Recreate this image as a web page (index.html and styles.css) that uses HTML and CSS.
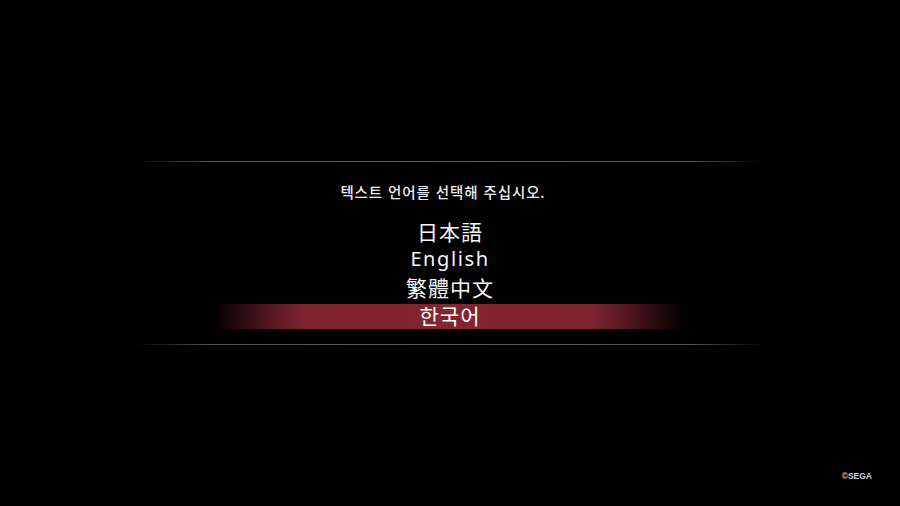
FILE: index.html
```html
<!DOCTYPE html>
<html lang="ko">
<head>
<meta charset="utf-8">
<title>Language Select</title>
<link rel="stylesheet" href="styles.css">
</head>
<body>
<main class="screen">
  <section class="panel">
    <div class="rule"></div>
    <p class="prompt">텍스트 언어를 선택해 주십시오.</p>
    <ul class="menu">
      <li class="item" lang="ja">日本語</li>
      <li class="item item-latin" lang="en">English</li>
      <li class="item" lang="zh-Hant">繁體中文</li>
      <li class="item selected" lang="ko">한국어</li>
    </ul>
    <div class="rule rule-bottom"></div>
  </section>
  <footer class="copyright">©SEGA</footer>
</main>
</body>
</html>
```

FILE: styles.css
```css
html, body {
  margin: 0;
  padding: 0;
  background: #000;
}

body {
  font-family: "Noto Sans CJK KR", "Noto Sans", sans-serif;
  color: #f2f2f2;
}

.screen {
  height: 506px;
  display: flex;
  flex-direction: column;
  align-items: center;
}

.panel {
  width: 630px;
  margin-top: 161px;
  display: flex;
  flex-direction: column;
  align-items: center;
}

.rule {
  width: 100%;
  height: 1px;
  background: linear-gradient(to right,
    rgba(90, 90, 90, 0) 0%,
    #555 12%,
    #5c5c5c 50%,
    #555 88%,
    rgba(90, 90, 90, 0) 100%);
}

.prompt {
  margin: 0 14px 0 0;
  padding-top: 20px;
  font-size: 14.5px;
  font-weight: 500;
  line-height: 20px;
  letter-spacing: 0.9px;
  color: #ececec;
}

.menu {
  list-style: none;
  margin: 15px 0 0;
  padding: 0;
  width: 462px;
  display: flex;
  flex-direction: column;
}

.item {
  height: 28px;
  line-height: 28px;
  font-size: 21px;
  font-weight: 400;
  letter-spacing: 1px;
  text-align: center;
  color: #f6f6f6;
}

.item-latin {
  font-family: "Noto Sans", "Open Sans", sans-serif;
  font-size: 20px;
  letter-spacing: 1.6px;
}

.selected {
  background:
    linear-gradient(to right,
      rgba(122, 34, 46, 0.1) 0%,
      rgba(122, 34, 46, 0.4) 6%,
      rgba(122, 34, 46, 0.75) 12%,
      #7e2430 19%,
      #82252f 50%,
      #7e2430 80%,
      rgba(122, 34, 46, 0.7) 88%,
      rgba(122, 34, 46, 0.3) 95%,
      rgba(122, 34, 46, 0.04) 100%)
    center 3px / 100% 25px no-repeat;
  color: #fff;
}

.rule-bottom {
  margin-top: 15px;
}

.copyright {
  margin-top: auto;
  align-self: flex-end;
  margin-right: 28px;
  margin-bottom: 25px;
  font-family: "Liberation Sans", Arial, sans-serif;
  font-size: 8.5px;
  font-weight: bold;
  line-height: 10px;
  color: #d0d0d0;
}
```
